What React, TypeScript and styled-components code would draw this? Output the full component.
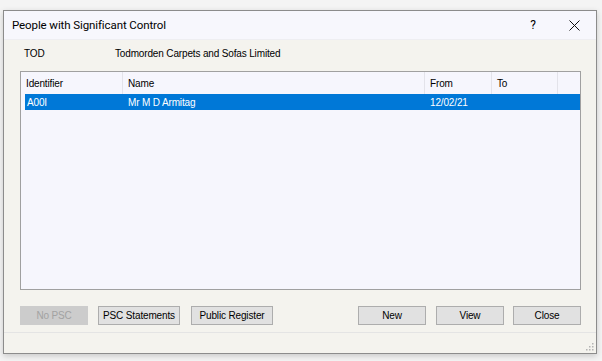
import styled, { createGlobalStyle } from "styled-components";

const GlobalStyle = createGlobalStyle`
  html, body {
    margin: 0;
    padding: 0;
    background: #f4f4f4;
  }
  body {
    font-family: "Liberation Sans", Arial, sans-serif;
    font-size: 10px;
    letter-spacing: -0.15px;
    color: #000;
  }
`;

const Screen = styled.div`
  width: 602px;
  height: 361px;
  padding: 10px 0 0 3px;
  box-sizing: border-box;
`;

const Window = styled.div`
  width: 594px;
  height: 344px;
  box-sizing: border-box;
  border: 1px solid #8c8c8c;
  box-shadow: 0 2px 6px rgba(0, 0, 0, 0.18);
  display: flex;
  flex-direction: column;
  background: #f4f3ee;
`;

const TitleBar = styled.div`
  height: 28px;
  display: flex;
  align-items: center;
  background: #f7f7fd;
  border-bottom: 1px solid #eeeef2;
  padding-left: 8px;
  font-family: Roboto, "Liberation Sans", sans-serif;
  font-size: 11.5px;
  letter-spacing: -0.1px;
`;

const Title = styled.span`
  flex: 1;
`;

const CaptionButton = styled.div<{ $width: number; $shift?: number }>`
  width: ${(p) => p.$width}px;
  height: 28px;
  display: flex;
  align-items: center;
  justify-content: center;
  padding-left: ${(p) => p.$shift ?? 0}px;
  box-sizing: border-box;
  font-size: 12px;
`;

const Body = styled.div`
  flex: 1;
  display: flex;
  flex-direction: column;
  padding: 2px 15px 0 16px;
`;

const InfoRow = styled.div`
  height: 22px;
  display: flex;
  align-items: center;
  padding-left: 4px;
`;

const InfoCell = styled.span<{ $width?: number }>`
  width: ${(p) => (p.$width ? `${p.$width}px` : "auto")};
`;

const ListBox = styled.div`
  margin-top: 7px;
  height: 219px;
  box-sizing: border-box;
  border: 1px solid #a0a0a0;
  background: #f6f6fd;
`;

const HeaderRow = styled.div`
  display: grid;
  grid-template-columns: 102px 302px 67px 66px;
  height: 22px;
`;

const HeaderCell = styled.div`
  display: flex;
  align-items: center;
  padding-left: 5px;
  border-right: 1px solid #e3e3ea;
`;

const DataRow = styled.div<{ $selected?: boolean }>`
  display: grid;
  grid-template-columns: 98px 302px 67px 66px;
  height: 16px;
  margin-left: 4px;
  background: ${(p) => (p.$selected ? "#0078d7" : "transparent")};
  color: ${(p) => (p.$selected ? "#fff" : "#000")};
`;

const DataCell = styled.div<{ $pad: number }>`
  display: flex;
  align-items: center;
  padding-left: ${(p) => p.$pad}px;
`;

const ButtonRow = styled.div`
  margin-top: 16px;
  display: flex;
  align-items: center;
`;

const Button = styled.button<{ $width: number; $gap?: number }>`
  width: ${(p) => p.$width}px;
  height: 19px;
  margin-left: ${(p) => p.$gap ?? 0}px;
  padding: 0;
  box-sizing: border-box;
  border: 1px solid #adadad;
  background: #e1e1e1;
  font-family: "Liberation Sans", Arial, sans-serif;
  font-size: 10px;
  letter-spacing: -0.15px;
  white-space: nowrap;
  color: #000;

  &:disabled {
    border-color: #cccccc;
    background: #cccccc;
    color: #a2a2a2;
  }
`;

const Spacer = styled.div`
  flex: 1;
`;

const StatusBar = styled.div`
  margin-top: 7px;
  height: 21px;
  border-top: 1px solid #e4e4e4;
  display: flex;
  justify-content: flex-end;
  align-items: flex-end;
  padding: 0 2px 2px 0;
`;

const columns = [
  { label: "Identifier", value: "A00I", pad: 2 },
  { label: "Name", value: "Mr M D Armitag", pad: 5 },
  { label: "From", value: "12/02/21", pad: 5 },
  { label: "To", value: "", pad: 5 },
];

function Grip() {
  const dots = [
    [8, 2],
    [5, 5],
    [8, 5],
    [2, 8],
    [5, 8],
    [8, 8],
  ];
  return (
    <svg width="10" height="10" viewBox="0 0 10 10">
      {dots.map(([x, y]) => (
        <rect key={`${x}-${y}`} x={x} y={y} width="1.5" height="1.5" fill="#b4b4b4" />
      ))}
    </svg>
  );
}

export default function App() {
  return (
    <Screen>
      <GlobalStyle />
      <Window>
        <TitleBar>
          <Title>People with Significant Control</Title>
          <CaptionButton $width={44} $shift={6}>
            ?
          </CaptionButton>
          <CaptionButton $width={44}>
            <svg width="11" height="11" viewBox="0 0 11 11">
              <path d="M0.5 0.5 L10.5 10.5 M10.5 0.5 L0.5 10.5" stroke="#111" strokeWidth="1" />
            </svg>
          </CaptionButton>
        </TitleBar>
        <Body>
          <InfoRow>
            <InfoCell $width={91}>TOD</InfoCell>
            <InfoCell>Todmorden Carpets and Sofas Limited</InfoCell>
          </InfoRow>
          <ListBox>
            <HeaderRow>
              {columns.map((c) => (
                <HeaderCell key={c.label}>{c.label}</HeaderCell>
              ))}
            </HeaderRow>
            <DataRow $selected>
              {columns.map((c) => (
                <DataCell key={c.label} $pad={c.pad}>
                  {c.value}
                </DataCell>
              ))}
            </DataRow>
          </ListBox>
          <ButtonRow>
            <Button $width={68} disabled>
              No PSC
            </Button>
            <Button $width={82} $gap={10}>
              PSC Statements
            </Button>
            <Button $width={82} $gap={11}>
              Public Register
            </Button>
            <Spacer />
            <Button $width={68}>New</Button>
            <Button $width={68} $gap={10}>
              View
            </Button>
            <Button $width={68} $gap={9}>
              Close
            </Button>
          </ButtonRow>
        </Body>
        <StatusBar>
          <Grip />
        </StatusBar>
      </Window>
    </Screen>
  );
}
